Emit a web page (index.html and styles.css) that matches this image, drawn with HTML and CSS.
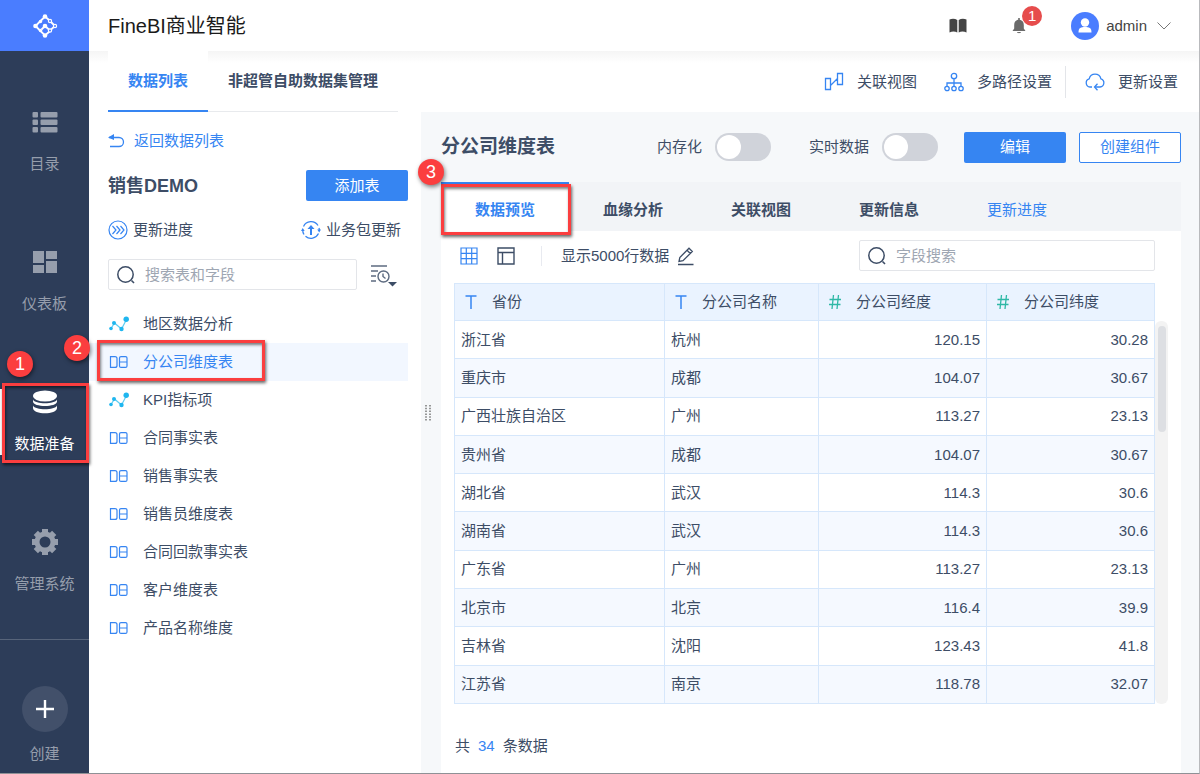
FILE: index.html
```html
<!DOCTYPE html>
<html lang="zh-CN">
<head>
    <meta charset="UTF-8">
    <meta name="viewport" content="width=device-width, initial-scale=1.0">
    <title>FineBI商业智能</title>
    <link rel="stylesheet" href="styles.css">
</head>
<body>

    <!-- icons used more than once -->
    <svg class="defs" width="0" height="0" aria-hidden="true">
        <symbol id="icon-db" viewBox="0 0 20 20">
            <path d="M1.500 4.600h4.500a2 2 0 0 1 2 2v6.800a2 2 0 0 1-2 2h-4.500z M10.500 6.100a1.500 1.500 0 0 1 1.500-1.500h4.500a1.500 1.500 0 0 1 1.500 1.500v7.800a1.500 1.500 0 0 1-1.500 1.500h-4.500a1.500 1.500 0 0 1-1.500-1.500z M10.500 10h7.500" fill="none" stroke="#3685f2" stroke-width="1.200"/>
        </symbol>
        <symbol id="icon-chart" viewBox="0 0 20 20">
            <path d="M2 14.500L5.500 9L12.500 15L17.500 5.500" fill="none" stroke="#5ecdf2" stroke-width="1.200"/>
            <g fill="#1fb6ef"><circle cx="2" cy="14.500" r="1.800"/><circle cx="5" cy="9" r="2"/><circle cx="12.500" cy="15" r="2.200"/><circle cx="17.200" cy="5.200" r="2.700"/></g>
        </symbol>
        <symbol id="icon-search" viewBox="0 0 20 20">
            <path d="M15.500 15.500L18 18" fill="none" stroke="#3d4d66" stroke-width="1.600"/>
            <circle cx="9.500" cy="9.500" r="7.700" fill="none" stroke="#3d4d66" stroke-width="1.500"/>
        </symbol>
    </svg>

    <aside class="sidebar">
        <div class="logo">
            <svg width="26" height="26" viewBox="0 0 26 26">
                <path d="M3.500 13L13 3.500M3.500 13L13 22.500L18 18M13 3.500L17 7M9.500 16.500L13 13M18 8L23 13L18 17.500L13 13" fill="none" stroke="#fff" stroke-width="1.800"/>
                <g fill="#fff"><circle cx="13" cy="3.500" r="2.300"/><circle cx="3.500" cy="13" r="2.300"/><circle cx="13" cy="22.500" r="2.300"/><circle cx="8.500" cy="8.500" r="1.700"/><circle cx="8.500" cy="17.500" r="1.700"/><circle cx="13" cy="13" r="2.300"/></g>
                <g fill="#4a7dff" stroke="#fff" stroke-width="1.200"><circle cx="18" cy="8" r="1.600"/><circle cx="23" cy="13" r="1.600"/><circle cx="18" cy="17.500" r="1.600"/></g>
            </svg>
        </div>
        <nav class="nav">
            <a class="nav-item" href="#">
                <svg width="28" height="28" viewBox="0 0 28 28" fill="currentColor">
                    <rect x="1.500" y="4" width="5.500" height="5.500" rx="1"/><rect x="9.500" y="4" width="17" height="5.500" rx="1"/>
                    <rect x="1.500" y="11.500" width="5.500" height="5.500" rx="1"/><rect x="9.500" y="11.500" width="17" height="5.500" rx="1"/>
                    <rect x="1.500" y="19" width="5.500" height="5.500" rx="1"/><rect x="9.500" y="19" width="17" height="5.500" rx="1"/>
                </svg>
                <span>目录</span>
            </a>
            <a class="nav-item" href="#">
                <svg width="28" height="28" viewBox="0 0 28 28" fill="currentColor">
                    <rect x="2" y="3" width="11" height="12"/><rect x="15" y="3" width="11" height="8"/>
                    <rect x="2" y="17" width="11" height="8"/><rect x="15" y="13" width="11" height="12"/>
                </svg>
                <span>仪表板</span>
            </a>
            <a class="nav-item active" href="#">
                <svg width="28" height="28" viewBox="0 0 28 28" fill="currentColor">
                    <ellipse cx="14" cy="8" rx="12" ry="5.500"/>
                    <path d="M2 11.500c2 5 22 5 24 0v2c0 6-24 6-24 0z"/>
                    <path d="M2 17.500c2 5 22 5 24 0v2.500c0 7-24 7-24 0z"/>
                </svg>
                <span>数据准备</span>
                <i class="mark mark-nav"></i>
                <b class="step step-1">1</b>
            </a>
            <a class="nav-item" href="#">
                <svg width="28" height="28" viewBox="0 0 28 28">
                    <circle cx="14" cy="14" r="8" fill="none" stroke="currentColor" stroke-width="5"/>
                    <g stroke="currentColor" stroke-width="6">
                        <path d="M14 1v4M14 23v4M1 14h4M23 14h4M4.800 4.800l2.800 2.800M20.400 20.400l2.800 2.800M4.800 23.200l2.800-2.800M20.400 7.600l2.800-2.800"/>
                    </g>
                </svg>
                <span>管理系统</span>
            </a>
        </nav>
        <div class="create">
            <button class="create-btn" type="button" aria-label="创建">
                <svg width="20" height="20" viewBox="0 0 20 20"><path d="M10 1v18M1 10h18" stroke="#fff" stroke-width="2.400"/></svg>
            </button>
            <span>创建</span>
        </div>
    </aside>

    <div class="page">
        <header class="header">
            <h1>FineBI商业智能</h1>
            <div class="header-tools">
                <svg width="18" height="16" viewBox="0 0 18 16"><path d="M0.500 1.500C3 0.500 6 0.500 8.300 2v12.500C6 13.200 3 13.200 0.500 14.500zM17.500 1.500C15 0.500 12 0.500 9.700 2v12.500C12 13.200 15 13.200 17.500 14.500z" fill="#444"/></svg>
                <div class="bell">
                    <svg width="14" height="16" viewBox="0 0 14 16"><path d="M6.200 0h1.600v1.800C10.500 2.300 11.800 4.200 11.800 7v3.500L13.500 13H0.500L2.200 10.500V7C2.200 4.200 3.500 2.300 6.200 1.800zM5 14h4c-.5 1.600-3.500 1.600-4 0z" fill="#6a6a6a"/></svg>
                    <span class="badge">1</span>
                </div>
                <a class="user" href="#">
                    <svg width="28" height="28" viewBox="0 0 28 28"><circle cx="14" cy="14" r="14" fill="#4a7dff"/><circle cx="14" cy="10.500" r="4.200" fill="#fff"/><path d="M7.500 20.500c0-5 2.500-5.500 6.500-5.500s6.500.5 6.500 5.500z" fill="#fff"/></svg>
                    <span>admin</span>
                    <svg class="caret" width="14" height="8" viewBox="0 0 14 8"><path d="M.5.500L7 7l6.500-6.500" fill="none" stroke="#777"/></svg>
                </a>
            </div>
        </header>

        <div class="subheader">
            <nav class="top-tabs">
                <a class="top-tab active" href="#">数据列表</a>
                <a class="top-tab" href="#">非超管自助数据集管理</a>
            </nav>
            <div class="actions">
                <a class="action" href="#">
                    <svg width="20" height="20" viewBox="0 0 20 20"><path d="M1.500 6.500h5v11h-5zM13.500 1.500h5v11h-5zM6.500 13.500L13.500 6.500" fill="none" stroke="#3685f2" stroke-width="1.300"/></svg>
                    <span>关联视图</span>
                </a>
                <a class="action" href="#">
                    <svg width="20" height="20" viewBox="0 0 20 20" fill="none" stroke="#3685f2" stroke-width="1.300"><circle cx="10" cy="4" r="2.700"/><circle cx="3" cy="16.500" r="2.200"/><circle cx="10" cy="16.500" r="2.200"/><circle cx="17" cy="16.500" r="2.200"/><path d="M10 6.700v7.500M3 14.200V11h14v3.200"/></svg>
                    <span>多路径设置</span>
                </a>
                <a class="action last" href="#">
                    <svg width="20" height="20" viewBox="0 0 20 20" fill="none" stroke="#3685f2" stroke-width="1.300"><path d="M7 15H5a4.200 4.200 0 0 1-.8-8.200C5 3.800 7.500 2.200 10 2.200c3 0 5.200 1.800 5.900 4.600A4.200 4.200 0 0 1 15 15h-5"/><path d="M12.500 11.800L9.500 15l3 3.200"/></svg>
                    <span>更新设置</span>
                </a>
            </div>
        </div>

        <div class="content">
            <section class="list-panel">
                <a class="back" href="#">
                    <svg width="17" height="16" viewBox="0 0 17 16"><path d="M1 4.500h10a4.500 4.500 0 0 1 0 9H2" fill="none" stroke="#3685f2" stroke-width="1.300"/><path d="M0 4.500L6 1v6z" fill="#3685f2"/></svg>
                    <span>返回数据列表</span>
                </a>
                <div class="row group-head">
                    <h2>销售DEMO</h2>
                    <button class="btn" type="button">添加表</button>
                </div>
                <div class="row group-links">
                    <a href="#">
                        <svg width="20" height="20" viewBox="0 0 20 20" fill="none" stroke="#3685f2"><circle cx="10" cy="10" r="9" stroke-width="1.200"/><path d="M4.500 6L8 10l-3.500 4M8.500 6l3.500 4-3.500 4M12.500 6l3.500 4-3.500 4" stroke-width="1.200"/></svg>
                        <span>更新进度</span>
                    </a>
                    <a href="#">
                        <svg width="20" height="20" viewBox="0 0 20 20"><path d="M2.500 6.500A8.300 8.300 0 0 1 17 5.500M1.700 10a8.300 8.300 0 0 0 1.300 4.500M17.500 13.500A8.300 8.300 0 0 1 4.500 16.200M18.300 10a8.300 8.300 0 0 0-.3-2" fill="none" stroke="#3685f2" stroke-width="1.300"/><path d="M0 11l1.700-3 2 3zM16.200 9.500h3.800l-1.800 3zM6.500 9L10 5l3.500 4H11v6H9V9z" fill="#3685f2"/></svg>
                        <span>业务包更新</span>
                    </a>
                </div>
                <div class="row search-row">
                    <label class="search">
                        <svg width="20" height="20"><use href="#icon-search"/></svg>
                        <input type="text" placeholder="搜索表和字段" aria-label="搜索表和字段">
                    </label>
                    <button class="sort" type="button" aria-label="排序">
                        <svg width="26" height="24" viewBox="0 0 26 24"><g fill="none" stroke="#5d6b80" stroke-width="1.400"><path d="M0 3h16M0 8h7M0 13h5M0 18h5"/><circle cx="12.500" cy="13.500" r="5.500"/><path d="M12 10.500v3l2.500 2"/></g><path d="M17 19h9l-4.500 4.500z" fill="#3d4d66"/></svg>
                    </button>
                </div>
                <ul class="tables">
                    <li><a href="#"><svg width="20" height="20"><use href="#icon-chart"/></svg>地区数据分析</a></li>
                    <li class="selected">
                        <a href="#"><svg width="20" height="20"><use href="#icon-db"/></svg>分公司维度表</a>
                        <i class="mark mark-list"></i>
                        <b class="step step-2">2</b>
                    </li>
                    <li><a href="#"><svg width="20" height="20"><use href="#icon-chart"/></svg>KPI指标项</a></li>
                    <li><a href="#"><svg width="20" height="20"><use href="#icon-db"/></svg>合同事实表</a></li>
                    <li><a href="#"><svg width="20" height="20"><use href="#icon-db"/></svg>销售事实表</a></li>
                    <li><a href="#"><svg width="20" height="20"><use href="#icon-db"/></svg>销售员维度表</a></li>
                    <li><a href="#"><svg width="20" height="20"><use href="#icon-db"/></svg>合同回款事实表</a></li>
                    <li><a href="#"><svg width="20" height="20"><use href="#icon-db"/></svg>客户维度表</a></li>
                    <li><a href="#"><svg width="20" height="20"><use href="#icon-db"/></svg>产品名称维度</a></li>
                </ul>
            </section>

            <div class="splitter">
                <svg width="8" height="16" viewBox="0 0 8 16"><path d="M2 0v16M6 0v16" stroke="#777" stroke-width="1.500" stroke-dasharray="1.500 1.300"/></svg>
            </div>

            <main class="detail">
                <div class="detail-head">
                    <h2>分公司维度表</h2>
                    <label class="toggle">内存化<input type="checkbox"></label>
                    <label class="toggle">实时数据<input type="checkbox"></label>
                    <button class="btn" type="button">编辑</button>
                    <button class="btn outline" type="button">创建组件</button>
                </div>

                <div class="card">
                    <nav class="tabs">
                        <a class="tab active" href="#">数据预览<i class="mark mark-tab"></i><b class="step step-3">3</b></a>
                        <a class="tab" href="#">血缘分析</a>
                        <a class="tab" href="#">关联视图</a>
                        <a class="tab" href="#">更新信息</a>
                        <a class="tab plain" href="#">更新进度</a>
                    </nav>

                    <div class="toolbar">
                        <button class="icon-btn" type="button" aria-label="表格视图">
                            <svg width="18" height="18" viewBox="0 0 18 18"><path d="M1 1h16v16H1zM6.300 1v16M11.700 1v16M1 6.300h16M1 11.700h16" fill="none" stroke="#3685f2" stroke-width="1.200"/></svg>
                        </button>
                        <button class="icon-btn" type="button" aria-label="字段视图">
                            <svg width="18" height="18" viewBox="0 0 18 18"><path d="M1 1h16v16H1zM1 5.500h16M5.500 5.500v11.500" fill="none" stroke="#3d4d66" stroke-width="1.400"/></svg>
                        </button>
                        <span class="limit">显示5000行数据</span>
                        <button class="icon-btn pencil" type="button" aria-label="修改行数">
                            <svg width="18" height="20" viewBox="0 0 18 20"><path d="M2 15.500l.8-4L12 2.200l3.300 3.300L6 14.700zM10 4.200l3.300 3.300M1 18.500h15.500" fill="none" stroke="#3d4d66" stroke-width="1.300"/></svg>
                        </button>
                        <label class="search">
                            <svg width="20" height="20"><use href="#icon-search"/></svg>
                            <input type="text" placeholder="字段搜索" aria-label="字段搜索">
                        </label>
                    </div>

                    <div class="table-wrap">
                        <table>
                            <colgroup><col><col class="col-name"><col class="col-num"><col class="col-num"></colgroup>
                            <thead>
                                <tr>
                                    <th><svg width="12" height="14" viewBox="0 0 12 14"><path d="M.5 1h11M6 1V14" stroke="#3685f2" stroke-width="1.500"/></svg>省份</th>
                                    <th><svg width="12" height="14" viewBox="0 0 12 14"><path d="M.5 1h11M6 1V14" stroke="#3685f2" stroke-width="1.500"/></svg>分公司名称</th>
                                    <th><svg width="12" height="14" viewBox="0 0 12 14"><path d="M4.500 0L3 14M9.500 0L8 14M.5 4.500h11.500M0 9.500h11.500" stroke="#2fb8a6" stroke-width="1.300"/></svg>分公司经度</th>
                                    <th><svg width="12" height="14" viewBox="0 0 12 14"><path d="M4.500 0L3 14M9.500 0L8 14M.5 4.500h11.500M0 9.500h11.500" stroke="#2fb8a6" stroke-width="1.300"/></svg>分公司纬度</th>
                                </tr>
                            </thead>
                            <tbody>
                                <tr><td>浙江省</td><td>杭州</td><td class="num">120.15</td><td class="num">30.28</td></tr>
                                <tr><td>重庆市</td><td>成都</td><td class="num">104.07</td><td class="num">30.67</td></tr>
                                <tr><td>广西壮族自治区</td><td>广州</td><td class="num">113.27</td><td class="num">23.13</td></tr>
                                <tr><td>贵州省</td><td>成都</td><td class="num">104.07</td><td class="num">30.67</td></tr>
                                <tr><td>湖北省</td><td>武汉</td><td class="num">114.3</td><td class="num">30.6</td></tr>
                                <tr><td>湖南省</td><td>武汉</td><td class="num">114.3</td><td class="num">30.6</td></tr>
                                <tr><td>广东省</td><td>广州</td><td class="num">113.27</td><td class="num">23.13</td></tr>
                                <tr><td>北京市</td><td>北京</td><td class="num">116.4</td><td class="num">39.9</td></tr>
                                <tr><td>吉林省</td><td>沈阳</td><td class="num">123.43</td><td class="num">41.8</td></tr>
                                <tr><td>江苏省</td><td>南京</td><td class="num">118.78</td><td class="num">32.07</td></tr>
                            </tbody>
                        </table>
                        <div class="scrollbar"><div class="thumb"></div></div>
                    </div>

                    <p class="total">共<span>34</span>条数据</p>
                </div>
            </main>
        </div>
    </div>

</body>
</html>
```

FILE: styles.css
```css
* {
    box-sizing: border-box;
}
body {
    margin: 0;
    height: 100vh;
    display: grid;
    grid-template-columns: 89px 1fr;
    font-family: "Liberation Sans", "Noto Sans CJK SC", sans-serif;
    font-size: 15px;
    line-height: 20px;
    color: #3d4d66;
    background: #fff;
    overflow: hidden;
}
a {
    color: inherit;
    text-decoration: none;
}
h1, h2, p, ul {
    margin: 0;
    padding: 0;
}
button, input {
    font: inherit;
    color: inherit;
}
button {
    border: none;
    background: none;
    padding: 0;
    cursor: pointer;
}
svg {
    display: block;
    flex: none;
}
.defs {
    position: absolute;
}

/* sidebar */
.sidebar {
    display: flex;
    flex-direction: column;
    background: #2d3d59;
    color: #969eac;
    border-bottom: 1px solid #8f9196;
}
.logo {
    height: 51px;
    display: flex;
    align-items: center;
    justify-content: center;
    background: #4a7dff;
}
.nav {
    flex: 1;
    display: flex;
    flex-direction: column;
    gap: 60px;
    padding-top: 52px;
}
.nav-item {
    position: relative;
    height: 80px;
    display: flex;
    flex-direction: column;
    align-items: center;
    gap: 18px;
    padding-top: 5px;
}
.nav-item.active {
    color: #fff;
}
.nav-item.active::before {
    content: "";
    position: absolute;
    left: 0;
    top: 6px;
    bottom: 8px;
    width: 2px;
    background: #fff;
}
.create {
    display: flex;
    flex-direction: column;
    align-items: center;
    gap: 12px;
    padding: 46px 0 9px;
    border-top: 1px solid #57647a;
}
.create-btn {
    width: 46px;
    height: 46px;
    display: flex;
    align-items: center;
    justify-content: center;
    border-radius: 50%;
    background: #42506a;
}

/* numbered callouts */
.mark {
    position: absolute;
    border: 3px solid #fb3e3f;
    box-shadow: 1px 2px 3px rgba(0, 0, 0, 0.6), inset 1px 2px 3px rgba(0, 0, 0, 0.5);
    pointer-events: none;
    z-index: 2;
}
.mark-nav {
    inset: 0 0 0 2px;
}
.mark-list {
    left: 8px;
    top: -3px;
    bottom: 0;
    width: 168px;
}
.mark-tab {
    inset: 2px -2px -4px 0;
}
.step {
    position: absolute;
    width: 26px;
    height: 26px;
    border-radius: 50%;
    background: #fb3e3f;
    color: #fff;
    font-size: 18px;
    font-weight: normal;
    line-height: 26px;
    text-align: center;
    box-shadow: 1px 2px 4px rgba(0, 0, 0, 0.5);
    z-index: 3;
}
.step-1 {
    left: 7px;
    top: -32px;
}
.step-2 {
    left: -25px;
    top: -8px;
}
.step-3 {
    left: -23px;
    top: -23px;
}

/* header */
.page {
    display: flex;
    flex-direction: column;
    min-width: 0;
    min-height: 0;
    border-right: 1px solid #b9babd;
    border-bottom: 1px solid #8f9196;
}
.header {
    height: 51px;
    display: flex;
    align-items: center;
    justify-content: space-between;
    padding: 0 28px 0 19px;
}
.header h1 {
    font-size: 20px;
    font-weight: normal;
    color: #1a1a1a;
}
.header-tools {
    display: flex;
    align-items: center;
    gap: 45px;
    color: #444;
}
.bell {
    position: relative;
}
.badge {
    position: absolute;
    left: 10px;
    top: -12px;
    width: 20px;
    height: 20px;
    border-radius: 50%;
    background: #e64c4c;
    color: #fff;
    text-align: center;
}
.user {
    display: flex;
    align-items: center;
    gap: 7px;
}
.caret {
    margin-left: 3px;
}
.subheader {
    height: 61px;
    display: flex;
    justify-content: space-between;
    padding: 0 21px 0 19px;
    background: linear-gradient(#f5f5f5, #fff 12px);
}
.top-tabs {
    display: flex;
    font-weight: bold;
}
.top-tab {
    display: flex;
    align-items: center;
    padding: 0 20px;
    border-bottom: 1px solid #e8eaed;
}
.top-tab.active {
    color: #3685f2;
    background: #fff;
    border-bottom: 2px solid #3685f2;
}
.actions {
    display: flex;
    align-items: center;
    gap: 27px;
}
.action {
    display: flex;
    align-items: center;
    gap: 13px;
}
.action.last {
    height: 32px;
    margin-left: -14px;
    padding-left: 19px;
    border-left: 1px solid #e3e5e9;
}

/* left panel */
.content {
    flex: 1;
    display: flex;
    min-height: 0;
    background: #f6f8fa;
}
.list-panel {
    width: 332px;
    padding: 19px 13px 0 19px;
    background: #fff;
}
.back {
    display: flex;
    align-items: center;
    gap: 9px;
    color: #3685f2;
}
.row {
    display: flex;
    align-items: center;
    justify-content: space-between;
}
.group-head {
    margin-top: 19px;
}
.group-head h2 {
    font-size: 18px;
}
.btn {
    width: 102px;
    height: 31px;
    border-radius: 2px;
    background: #3685f2;
    color: #fff;
}
.btn.outline {
    border: 1px solid #3685f2;
    background: #fff;
    color: #3685f2;
}
.group-links {
    margin-top: 19px;
    padding-right: 7px;
}
.group-links a {
    display: flex;
    align-items: center;
    gap: 5px;
}
.search-row {
    margin-top: 19px;
    padding-right: 11px;
}
.search {
    width: 249px;
    height: 31px;
    display: flex;
    align-items: center;
    gap: 9px;
    padding: 0 7px;
    border: 1px solid #e3e5e9;
    border-radius: 2px;
    background: #fff;
}
.search input {
    flex: 1;
    min-width: 0;
    padding: 0;
    border: none;
    outline: none;
    background: none;
}
.search input::placeholder {
    color: #9ea6b2;
}
.tables {
    margin: 15px -13px 0 -19px;
    padding-right: 13px;
    list-style: none;
}
.tables li {
    position: relative;
}
.tables a {
    height: 38px;
    display: flex;
    align-items: center;
    gap: 14px;
    padding-left: 20px;
}
.tables .selected {
    color: #3685f2;
    background: #f2f7ff;
}
.splitter {
    width: 20px;
    display: flex;
    justify-content: center;
    padding: 293px 6px 0 0;
}

/* detail */
.detail {
    flex: 1;
    min-width: 0;
    display: flex;
    flex-direction: column;
    padding: 0 18px 0 0;
}
.detail-head {
    height: 70px;
    display: flex;
    align-items: center;
    gap: 13px;
}
.detail-head h2 {
    flex: 1;
    font-size: 19px;
}
.toggle {
    display: flex;
    align-items: center;
    gap: 13px;
    margin-right: 25px;
}
.toggle + .btn {
    margin-left: -12px;
}
.toggle input {
    appearance: none;
    position: relative;
    width: 56px;
    height: 28px;
    margin: 0;
    border-radius: 14px;
    background: #d0d3da;
}
.toggle input::before {
    content: "";
    position: absolute;
    left: 2px;
    top: 2px;
    width: 24px;
    height: 24px;
    border-radius: 50%;
    background: #fff;
}
.card {
    flex: 1;
    min-height: 0;
    display: flex;
    flex-direction: column;
    background: #fff;
}
.tabs {
    display: flex;
    height: 49px;
    background: #f2f4f7;
    font-weight: bold;
}
.tab {
    position: relative;
    width: 128px;
    display: flex;
    align-items: center;
    justify-content: center;
    padding-top: 6px;
}
.tab.active {
    color: #3685f2;
    background: #fff;
    box-shadow: inset 0 2px #3685f2;
}
.tab.plain {
    color: #3685f2;
    font-weight: normal;
}
.toolbar {
    display: flex;
    align-items: center;
    padding: 9px 26px 12px 19px;
}
.icon-btn {
    margin-right: 19px;
}
.limit {
    margin-left: 7px;
    padding-left: 19px;
    border-left: 1px solid #e8eaf0;
}
.pencil {
    margin-left: 8px;
}
.toolbar .search {
    width: 296px;
    margin-left: auto;
}
.table-wrap {
    flex: 1;
    min-height: 0;
    display: flex;
    padding: 0 13px;
}
table {
    flex: 1;
    height: 100%;
    table-layout: fixed;
    border-collapse: collapse;
}
.col-name {
    width: 154px;
}
.col-num {
    width: 168px;
}
th, td {
    padding: 0 6px;
    border: 1px solid #d6e7fb;
    text-align: left;
    font-weight: normal;
}
th {
    height: 37px;
    padding-left: 10px;
    background: #eaf3ff;
}
th svg {
    display: inline-block;
    margin-right: 15px;
    vertical-align: -2px;
}
tbody tr:nth-child(even) {
    background: #f5f9ff;
}
.num {
    text-align: right;
}
.scrollbar {
    width: 13px;
    margin: 38px 0 0;
    padding: 5px 2px 0 3px;
    border-radius: 6px;
    background: #f3f3f3;
}
.thumb {
    height: 28%;
    border-radius: 4px;
    background: #dddfe3;
}
.total {
    padding: 32px 14px 17px;
}
.total span {
    margin: 0 8px;
    color: #3685f2;
}
```
